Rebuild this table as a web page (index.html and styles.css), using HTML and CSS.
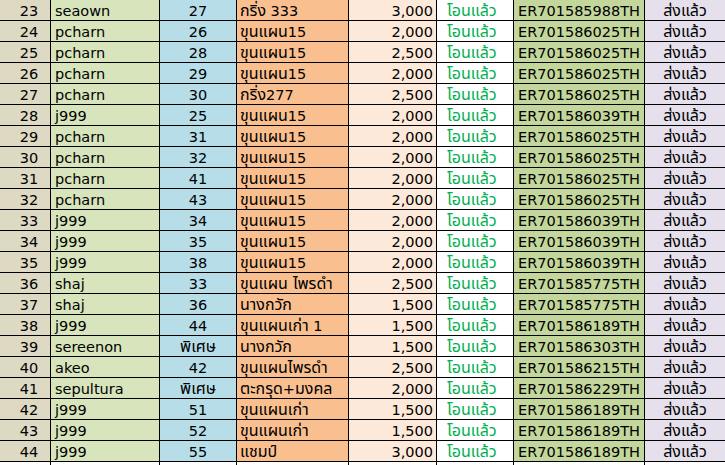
FILE: index.html
```html
<!DOCTYPE html>
<html lang="th">
<head>
<meta charset="utf-8">
<link rel="stylesheet" href="styles.css">
</head>
<body>
<div class="sheet">
  <div class="row"><div class="c no">23</div><div class="c user">seaown</div><div class="c code">27</div><div class="c item"><span class="th">กริ่ง</span> 333</div><div class="c price">3,000</div><div class="c paid"><span class="th">โอนแล้ว</span></div><div class="c track">ER701585988TH</div><div class="c sent"><span class="th">ส่งแล้ว</span></div></div>
  <div class="row"><div class="c no">24</div><div class="c user">pcharn</div><div class="c code">26</div><div class="c item"><span class="th">ขุนแผน</span>15</div><div class="c price">2,000</div><div class="c paid"><span class="th">โอนแล้ว</span></div><div class="c track">ER701586025TH</div><div class="c sent"><span class="th">ส่งแล้ว</span></div></div>
  <div class="row"><div class="c no">25</div><div class="c user">pcharn</div><div class="c code">28</div><div class="c item"><span class="th">ขุนแผน</span>15</div><div class="c price">2,500</div><div class="c paid"><span class="th">โอนแล้ว</span></div><div class="c track">ER701586025TH</div><div class="c sent"><span class="th">ส่งแล้ว</span></div></div>
  <div class="row"><div class="c no">26</div><div class="c user">pcharn</div><div class="c code">29</div><div class="c item"><span class="th">ขุนแผน</span>15</div><div class="c price">2,000</div><div class="c paid"><span class="th">โอนแล้ว</span></div><div class="c track">ER701586025TH</div><div class="c sent"><span class="th">ส่งแล้ว</span></div></div>
  <div class="row"><div class="c no">27</div><div class="c user">pcharn</div><div class="c code">30</div><div class="c item"><span class="th">กริ่ง</span>277</div><div class="c price">2,500</div><div class="c paid"><span class="th">โอนแล้ว</span></div><div class="c track">ER701586025TH</div><div class="c sent"><span class="th">ส่งแล้ว</span></div></div>
  <div class="row"><div class="c no">28</div><div class="c user">j999</div><div class="c code">25</div><div class="c item"><span class="th">ขุนแผน</span>15</div><div class="c price">2,000</div><div class="c paid"><span class="th">โอนแล้ว</span></div><div class="c track">ER701586039TH</div><div class="c sent"><span class="th">ส่งแล้ว</span></div></div>
  <div class="row"><div class="c no">29</div><div class="c user">pcharn</div><div class="c code">31</div><div class="c item"><span class="th">ขุนแผน</span>15</div><div class="c price">2,000</div><div class="c paid"><span class="th">โอนแล้ว</span></div><div class="c track">ER701586025TH</div><div class="c sent"><span class="th">ส่งแล้ว</span></div></div>
  <div class="row"><div class="c no">30</div><div class="c user">pcharn</div><div class="c code">32</div><div class="c item"><span class="th">ขุนแผน</span>15</div><div class="c price">2,000</div><div class="c paid"><span class="th">โอนแล้ว</span></div><div class="c track">ER701586025TH</div><div class="c sent"><span class="th">ส่งแล้ว</span></div></div>
  <div class="row"><div class="c no">31</div><div class="c user">pcharn</div><div class="c code">41</div><div class="c item"><span class="th">ขุนแผน</span>15</div><div class="c price">2,000</div><div class="c paid"><span class="th">โอนแล้ว</span></div><div class="c track">ER701586025TH</div><div class="c sent"><span class="th">ส่งแล้ว</span></div></div>
  <div class="row"><div class="c no">32</div><div class="c user">pcharn</div><div class="c code">43</div><div class="c item"><span class="th">ขุนแผน</span>15</div><div class="c price">2,000</div><div class="c paid"><span class="th">โอนแล้ว</span></div><div class="c track">ER701586025TH</div><div class="c sent"><span class="th">ส่งแล้ว</span></div></div>
  <div class="row"><div class="c no">33</div><div class="c user">j999</div><div class="c code">34</div><div class="c item"><span class="th">ขุนแผน</span>15</div><div class="c price">2,000</div><div class="c paid"><span class="th">โอนแล้ว</span></div><div class="c track">ER701586039TH</div><div class="c sent"><span class="th">ส่งแล้ว</span></div></div>
  <div class="row"><div class="c no">34</div><div class="c user">j999</div><div class="c code">35</div><div class="c item"><span class="th">ขุนแผน</span>15</div><div class="c price">2,000</div><div class="c paid"><span class="th">โอนแล้ว</span></div><div class="c track">ER701586039TH</div><div class="c sent"><span class="th">ส่งแล้ว</span></div></div>
  <div class="row"><div class="c no">35</div><div class="c user">j999</div><div class="c code">38</div><div class="c item"><span class="th">ขุนแผน</span>15</div><div class="c price">2,000</div><div class="c paid"><span class="th">โอนแล้ว</span></div><div class="c track">ER701586039TH</div><div class="c sent"><span class="th">ส่งแล้ว</span></div></div>
  <div class="row"><div class="c no">36</div><div class="c user">shaj</div><div class="c code">33</div><div class="c item"><span class="th">ขุนแผน ไพรดำ</span></div><div class="c price">2,500</div><div class="c paid"><span class="th">โอนแล้ว</span></div><div class="c track">ER701585775TH</div><div class="c sent"><span class="th">ส่งแล้ว</span></div></div>
  <div class="row"><div class="c no">37</div><div class="c user">shaj</div><div class="c code">36</div><div class="c item"><span class="th">นางกวัก</span></div><div class="c price">1,500</div><div class="c paid"><span class="th">โอนแล้ว</span></div><div class="c track">ER701585775TH</div><div class="c sent"><span class="th">ส่งแล้ว</span></div></div>
  <div class="row"><div class="c no">38</div><div class="c user">j999</div><div class="c code">44</div><div class="c item"><span class="th">ขุนแผนเก่า</span> 1</div><div class="c price">1,500</div><div class="c paid"><span class="th">โอนแล้ว</span></div><div class="c track">ER701586189TH</div><div class="c sent"><span class="th">ส่งแล้ว</span></div></div>
  <div class="row"><div class="c no">39</div><div class="c user">sereenon</div><div class="c code"><span class="th">พิเศษ</span></div><div class="c item"><span class="th">นางกวัก</span></div><div class="c price">1,500</div><div class="c paid"><span class="th">โอนแล้ว</span></div><div class="c track">ER701586303TH</div><div class="c sent"><span class="th">ส่งแล้ว</span></div></div>
  <div class="row"><div class="c no">40</div><div class="c user">akeo</div><div class="c code">42</div><div class="c item"><span class="th">ขุนแผนไพรดำ</span></div><div class="c price">2,500</div><div class="c paid"><span class="th">โอนแล้ว</span></div><div class="c track">ER701586215TH</div><div class="c sent"><span class="th">ส่งแล้ว</span></div></div>
  <div class="row"><div class="c no">41</div><div class="c user">sepultura</div><div class="c code"><span class="th">พิเศษ</span></div><div class="c item"><span class="th">ตะกรุด</span>+<span class="th">มงคล</span></div><div class="c price">2,000</div><div class="c paid"><span class="th">โอนแล้ว</span></div><div class="c track">ER701586229TH</div><div class="c sent"><span class="th">ส่งแล้ว</span></div></div>
  <div class="row"><div class="c no">42</div><div class="c user">j999</div><div class="c code">51</div><div class="c item"><span class="th">ขุนแผนเก่า</span></div><div class="c price">1,500</div><div class="c paid"><span class="th">โอนแล้ว</span></div><div class="c track">ER701586189TH</div><div class="c sent"><span class="th">ส่งแล้ว</span></div></div>
  <div class="row"><div class="c no">43</div><div class="c user">j999</div><div class="c code">52</div><div class="c item"><span class="th">ขุนแผนเก่า</span></div><div class="c price">1,500</div><div class="c paid"><span class="th">โอนแล้ว</span></div><div class="c track">ER701586189TH</div><div class="c sent"><span class="th">ส่งแล้ว</span></div></div>
  <div class="row"><div class="c no">44</div><div class="c user">j999</div><div class="c code">55</div><div class="c item"><span class="th">แชมป์</span></div><div class="c price">3,000</div><div class="c paid"><span class="th">โอนแล้ว</span></div><div class="c track">ER701586189TH</div><div class="c sent"><span class="th">ส่งแล้ว</span></div></div>
  <div class="row blank"><div class="c"></div><div class="c"></div><div class="c"></div><div class="c"></div><div class="c"></div><div class="c"></div><div class="c"></div><div class="c"></div></div>
</div>
</body>
</html>
```

FILE: styles.css
```css
html, body {
  margin: 0;
  padding: 0;
  background: #ffffff;
  overflow: hidden;
}
.sheet {
  width: 726px;
  font-family: Tahoma, "DejaVu Sans", "Noto Sans Thai", "Noto Sans", sans-serif;
  font-size: 14.5px;
  color: #000;
}
.row {
  display: grid;
  grid-template-columns: 51px 109px 77px 112px 88px 77px 131px 81px;
  height: 21px;
}
.c {
  box-sizing: border-box;
  border-right: 1px solid #000;
  border-bottom: 1px solid #000;
  height: 21px;
  line-height: 20px;
  padding-top: 1px;
  white-space: nowrap;
  overflow: hidden;
}
.th {
  font-size: 16px;
  line-height: 16px;
}
.no { background: #ddd9c3; text-align: center; padding-left: 8px; }
.user { background: #d7e4bc; padding-left: 4px; }
.code { background: #b7dee8; text-align: center; }
.item { background: #fabf8f; padding-left: 3px; }
.price { background: #fde9d9; text-align: right; padding-right: 3px; }
.paid { background: #ffffff; color: #00b050; padding-left: 10px; }
.track { background: #c3d69b; padding-left: 4px; }
.sent { background: #e5e0ec; text-align: center; }
.blank .c { background: #ffffff; }
```
